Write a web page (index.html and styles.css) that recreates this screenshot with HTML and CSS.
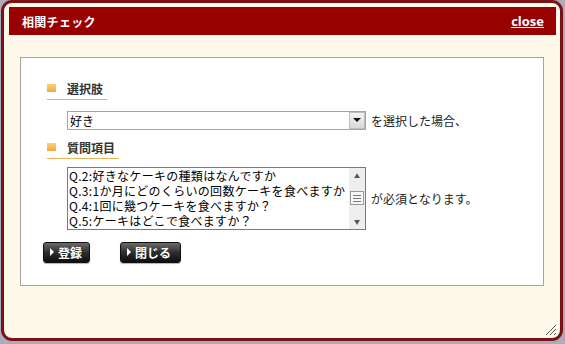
FILE: index.html
```html
<!DOCTYPE html>
<html>
	<head>
		<meta charset="utf-8" />
		<title>相関チェック</title>
		<link rel="stylesheet" href="styles.css">
	</head>
	<body>
		<div class="dialog">
			<div class="dlg-head">
				<span class="dlg-title">相関チェック</span>
				<a class="dlg-close" href="javascript:;">close</a>
			</div>
			<div class="panel">
				<div class="heading"><span class="mark"></span>選択肢</div>
				<div class="line">
					<div class="combo">
						<span class="combo-text">好き</span>
						<span class="combo-btn"><i class="tri-down"></i></span>
					</div>
					<span class="note">を選択した場合、</span>
				</div>
				<div class="heading heading2"><span class="mark"></span>質問項目</div>
				<div class="line line2">
					<div class="listbox">
						<ul class="list">
							<li>Q.2:好きなケーキの種類はなんですか</li>
							<li>Q.3:1か月にどのくらいの回数ケーキを食べますか</li>
							<li>Q.4:1回に幾つケーキを食べますか？</li>
							<li>Q.5:ケーキはどこで食べますか？</li>
						</ul>
						<div class="sbar">
							<span class="sb-arrow">&#9650;</span>
							<span class="sb-thumb"><i></i><i></i><i></i></span>
							<span class="sb-arrow">&#9660;</span>
						</div>
					</div>
					<span class="note">が必須となります。</span>
				</div>
				<div class="btns">
					<a class="btn" href="javascript:;"><i class="tri-right"></i>登録</a>
					<a class="btn btn-close" href="javascript:;"><i class="tri-right"></i>閉じる</a>
				</div>
			</div>
			<svg class="grip" width="12" height="12" viewBox="0 0 12 12">
				<path d="M11 1L1 11M11 5L5 11M11 9L9 11" stroke="#555" stroke-width="1" fill="none"/>
			</svg>
		</div>
	</body>
</html>
```

FILE: styles.css
```css
html,body,ul,li,div{margin:0;padding:0}
body{
	background:#a9adbb;
	font-family:"Noto Sans CJK JP","Liberation Sans",sans-serif;
	font-size:12px;
	color:#000;
	width:565px;
	height:344px;
	overflow:hidden;
}
.dialog{
	position:relative;
	box-sizing:border-box;
	width:562px;
	height:341px;
	margin:0 2px 0 1px;
	padding:4px 4px 0 5px;
	border:3px solid #7d1014;
	border-radius:11px;
	background:#fff9ec;
}
.dlg-head{
	height:28px;
	background:#990000;
	display:flex;
	align-items:center;
	justify-content:space-between;
	padding:0 12px 0 13px;
	color:#fff;
	font-weight:bold;
}
.dlg-title{
	font-size:12px;
	letter-spacing:0.3px;
}
.dlg-close{
	color:#fff;
	font-family:"Open Sans","Liberation Sans",sans-serif;
	font-size:13px;
	font-weight:bold;
	text-decoration:underline;
}
.panel{
	box-sizing:border-box;
	width:524px;
	height:229px;
	margin:22px 0 0 11px;
	padding:20px 0 0 26px;
	background:#fff;
	border:1px solid #a4a4a4;
}
.heading{
	display:inline-flex;
	align-items:center;
	height:15px;
	padding:0 4px 3px 0;
	border-bottom:1px solid #e4b35a;
	font-weight:bold;
	color:#333;
}
.heading2{margin-top:10px}
.mark{
	width:9px;
	height:8px;
	margin-right:11px;
	background:linear-gradient(#fbd27a,#f3a93a);
}
.line{
	display:flex;
	align-items:center;
	margin:11px 0 0 20px;
}
.line2{margin-top:8px}
.note{
	margin-left:5px;
	color:#222;
}
.combo{
	box-sizing:border-box;
	width:299px;
	height:19px;
	border:1px solid #a5a5a5;
	display:flex;
	align-items:center;
	justify-content:space-between;
}
.combo-text{
	padding-left:2px;
	line-height:17px;
}
.combo-btn{
	box-sizing:border-box;
	width:16px;
	height:17px;
	display:flex;
	align-items:center;
	justify-content:center;
	background:linear-gradient(#f4f4f4,#d8d8d8);
	border:1px solid #bdbdbd;
}
.tri-down{
	width:0;
	height:0;
	border-left:4px solid transparent;
	border-right:4px solid transparent;
	border-top:4px solid #111;
}
.listbox{
	box-sizing:border-box;
	width:299px;
	height:63px;
	border:1px solid #7a7a7a;
	display:flex;
}
.list{
	flex:1;
	list-style:none;
	overflow:hidden;
	white-space:nowrap;
}
.list li{
	height:15px;
	line-height:15px;
	padding-left:1px;
	letter-spacing:0.3px;
}
.sbar{
	width:16px;
	flex:none;
	background:#eeeeee;
	display:flex;
	flex-direction:column;
	align-items:center;
	justify-content:space-between;
}
.sb-arrow{
	font-size:6px;
	line-height:15px;
	color:#555;
}
.sb-thumb{
	box-sizing:border-box;
	width:14px;
	height:14px;
	border:1px solid #999;
	background:#f8f8f8;
	display:flex;
	flex-direction:column;
	justify-content:center;
	align-items:center;
	gap:2px;
}
.sb-thumb i{
	width:8px;
	height:1px;
	background:#777;
}
.btns{
	display:flex;
	gap:30px;
	margin:12px 0 0 -4px;
}
.btn{
	box-sizing:border-box;
	height:21px;
	padding:0 7px 0 6px;
	display:flex;
	align-items:center;
	gap:4px;
	color:#fff;
	font-weight:bold;
	text-decoration:none;
	border:1px solid #111;
	border-radius:3px;
	background:linear-gradient(#6a6a6a,#2e2e2e 50%,#0e0e0e);
	box-shadow:0 1px 1px rgba(0,0,0,0.3);
}
.btn-close{padding-right:9px}
.tri-right{
	width:0;
	height:0;
	border-top:4px solid transparent;
	border-bottom:4px solid transparent;
	border-left:4px solid #fff;
}
.grip{
	position:absolute;
	right:3px;
	bottom:2px;
}
```
